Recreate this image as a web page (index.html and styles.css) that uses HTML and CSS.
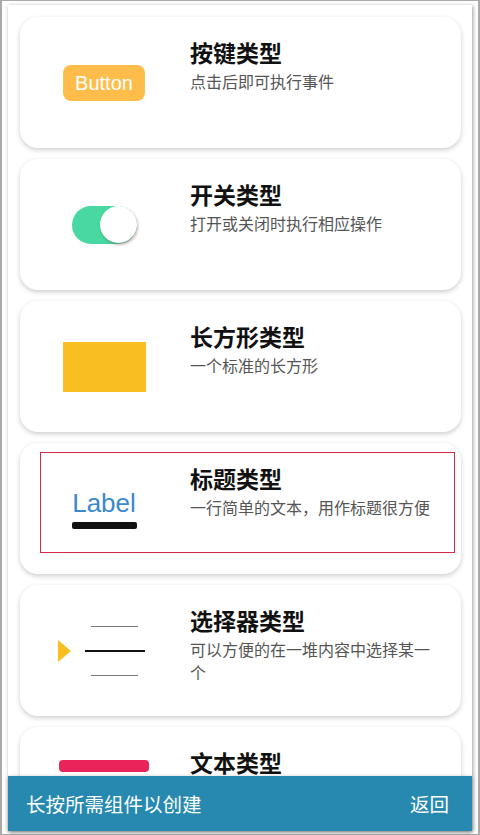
FILE: index.html
```html
<!DOCTYPE html>
<html lang="zh">
<head>
    <meta charset="UTF-8">
    <meta name="viewport" content="width=device-width, initial-scale=1.0">
    <title>组件类型</title>
    <link rel="stylesheet" href="styles.css">
</head>
<body>

    <div class="frame">
        <div class="panel">
            <div class="card-list">

                <!-- Button -->
                <div class="card">
                    <div class="row">
                        <div class="icon-cell">
                            <div class="demo-button">Button</div>
                        </div>
                        <div class="text-cell">
                            <div class="card-title">按键类型</div>
                            <div class="card-desc">点击后即可执行事件</div>
                        </div>
                    </div>
                </div>

                <!-- Switch -->
                <div class="card">
                    <div class="row">
                        <div class="icon-cell">
                            <div class="demo-switch"><span class="knob"></span></div>
                        </div>
                        <div class="text-cell">
                            <div class="card-title">开关类型</div>
                            <div class="card-desc">打开或关闭时执行相应操作</div>
                        </div>
                    </div>
                </div>

                <!-- Rectangle -->
                <div class="card">
                    <div class="row">
                        <div class="icon-cell">
                            <div class="demo-rect"></div>
                        </div>
                        <div class="text-cell">
                            <div class="card-title">长方形类型</div>
                            <div class="card-desc">一个标准的长方形</div>
                        </div>
                    </div>
                </div>

                <!-- Label (selected) -->
                <div class="card">
                    <div class="row selected">
                        <div class="icon-cell">
                            <div class="demo-label">
                                <span class="label-text">Label</span>
                                <span class="label-bar"></span>
                            </div>
                        </div>
                        <div class="text-cell">
                            <div class="card-title">标题类型</div>
                            <div class="card-desc">一行简单的文本，用作标题很方便</div>
                        </div>
                    </div>
                </div>

                <!-- Picker -->
                <div class="card">
                    <div class="row">
                        <div class="icon-cell">
                            <div class="demo-picker">
                                <span class="picker-arrow"></span>
                                <div class="picker-lines">
                                    <span class="line"></span>
                                    <span class="line current"></span>
                                    <span class="line"></span>
                                </div>
                            </div>
                        </div>
                        <div class="text-cell">
                            <div class="card-title">选择器类型</div>
                            <div class="card-desc">可以方便的在一堆内容中选择某一个</div>
                        </div>
                    </div>
                </div>

                <!-- Text (partly under the bottom bar) -->
                <div class="card">
                    <div class="row">
                        <div class="icon-cell top">
                            <div class="demo-text">
                                <span class="text-head"></span>
                                <span class="text-line"></span>
                                <span class="text-line"></span>
                            </div>
                        </div>
                        <div class="text-cell">
                            <div class="card-title">文本类型</div>
                        </div>
                    </div>
                </div>

            </div>

            <div class="bottom-bar">
                <span class="hint">长按所需组件以创建</span>
                <span class="back">返回</span>
            </div>
        </div>
    </div>

</body>
</html>
```

FILE: styles.css
```css
html, body {
    margin: 0;
    padding: 0;
    background: #fff;
}

body {
    font-family: "Noto Sans CJK SC", "Noto Sans", sans-serif;
}

.frame {
    box-sizing: border-box;
    width: 480px;
    height: 835px;
    border: 2px solid #a9a9a9;
    border-top-width: 1px;
    border-bottom-width: 1px;
    padding: 4px 6px 3px 6px;
}

.panel {
    height: 100%;
    display: flex;
    flex-direction: column;
    background: #fff;
    box-shadow: 1px 1px 4px rgba(0, 0, 0, 0.4);
}

.card-list {
    flex: 1;
    overflow: hidden;
    padding: 12px 11px 0 12px;
    display: flex;
    flex-direction: column;
    gap: 11px;
}

.card {
    flex-shrink: 0;
    height: 131px;
    box-sizing: border-box;
    padding: 10px 7px 0 21px;
    background: #fff;
    border-radius: 18px;
    box-shadow: 0 2px 5px rgba(0, 0, 0, 0.2);
}

.row {
    height: 99px;
    display: flex;
}

.row.selected {
    outline: 1px solid #d42a44;
}

/* Left column holding the preview of the widget */
.icon-cell {
    width: 126px;
    flex-shrink: 0;
    box-sizing: border-box;
    padding-top: 12px;
    display: flex;
    align-items: center;
    justify-content: center;
}

.icon-cell.top {
    align-items: flex-start;
    padding-top: 23px;
}

.text-cell {
    margin-left: 23px;
    width: 248px;
    padding-top: 10px;
}

.card-title {
    font-size: 23px;
    line-height: 28px;
    padding: 1px 0;
    font-weight: bold;
    color: #111;
}

.card-desc {
    margin-top: 3px;
    font-size: 16px;
    line-height: 23px;
    color: #555;
}

/* Widget previews */
.demo-button {
    width: 82px;
    height: 36px;
    border-radius: 8px;
    background: #febd4b;
    color: #fff;
    font-family: "Liberation Sans", Arial, sans-serif;
    font-size: 20px;
    line-height: 36px;
    text-align: center;
}

.demo-switch {
    position: relative;
    width: 65px;
    height: 38px;
    border-radius: 19px;
    background: #47d9a1;
}

.demo-switch .knob {
    position: absolute;
    right: 0;
    top: 0;
    width: 37px;
    height: 37px;
    border-radius: 50%;
    background: #fff;
    box-shadow: 1px 2px 3px rgba(110, 50, 50, 0.35);
}

.demo-rect {
    width: 83px;
    height: 50px;
    background: #f8be22;
}

.demo-label {
    display: flex;
    flex-direction: column;
    align-items: center;
}

.label-text {
    font-family: "Liberation Sans", Arial, sans-serif;
    font-size: 26px;
    line-height: 30px;
    color: #3d87cd;
}

.label-bar {
    margin-top: 4px;
    width: 65px;
    height: 7px;
    border-radius: 2px;
    background: #111;
}

.demo-picker {
    display: flex;
    align-items: center;
    margin-left: -6px;
}

.picker-arrow {
    width: 0;
    height: 0;
    border-top: 11px solid transparent;
    border-bottom: 11px solid transparent;
    border-left: 13px solid #f8be22;
    margin-right: 14px;
}

.picker-lines {
    display: flex;
    flex-direction: column;
    align-items: center;
    gap: 23px;
}

.picker-lines .line {
    display: block;
    width: 47px;
    height: 1px;
    background: #777;
}

.picker-lines .line.current {
    width: 60px;
    height: 2px;
    background: #111;
}

.demo-text {
    display: flex;
    flex-direction: column;
    gap: 8px;
}

.text-head {
    width: 90px;
    height: 12px;
    border-radius: 4px;
    background: #e8245a;
}

.text-line {
    width: 90px;
    height: 4px;
    background: #ccc;
}

/* Bottom action bar */
.bottom-bar {
    flex-shrink: 0;
    height: 55px;
    display: flex;
    align-items: center;
    justify-content: space-between;
    padding: 0 23px 0 18px;
    background: #2789b0;
    color: #fff;
    font-size: 19.5px;
    box-shadow: 0 1px 4px rgba(0, 0, 0, 0.3);
    position: relative;
}
```
